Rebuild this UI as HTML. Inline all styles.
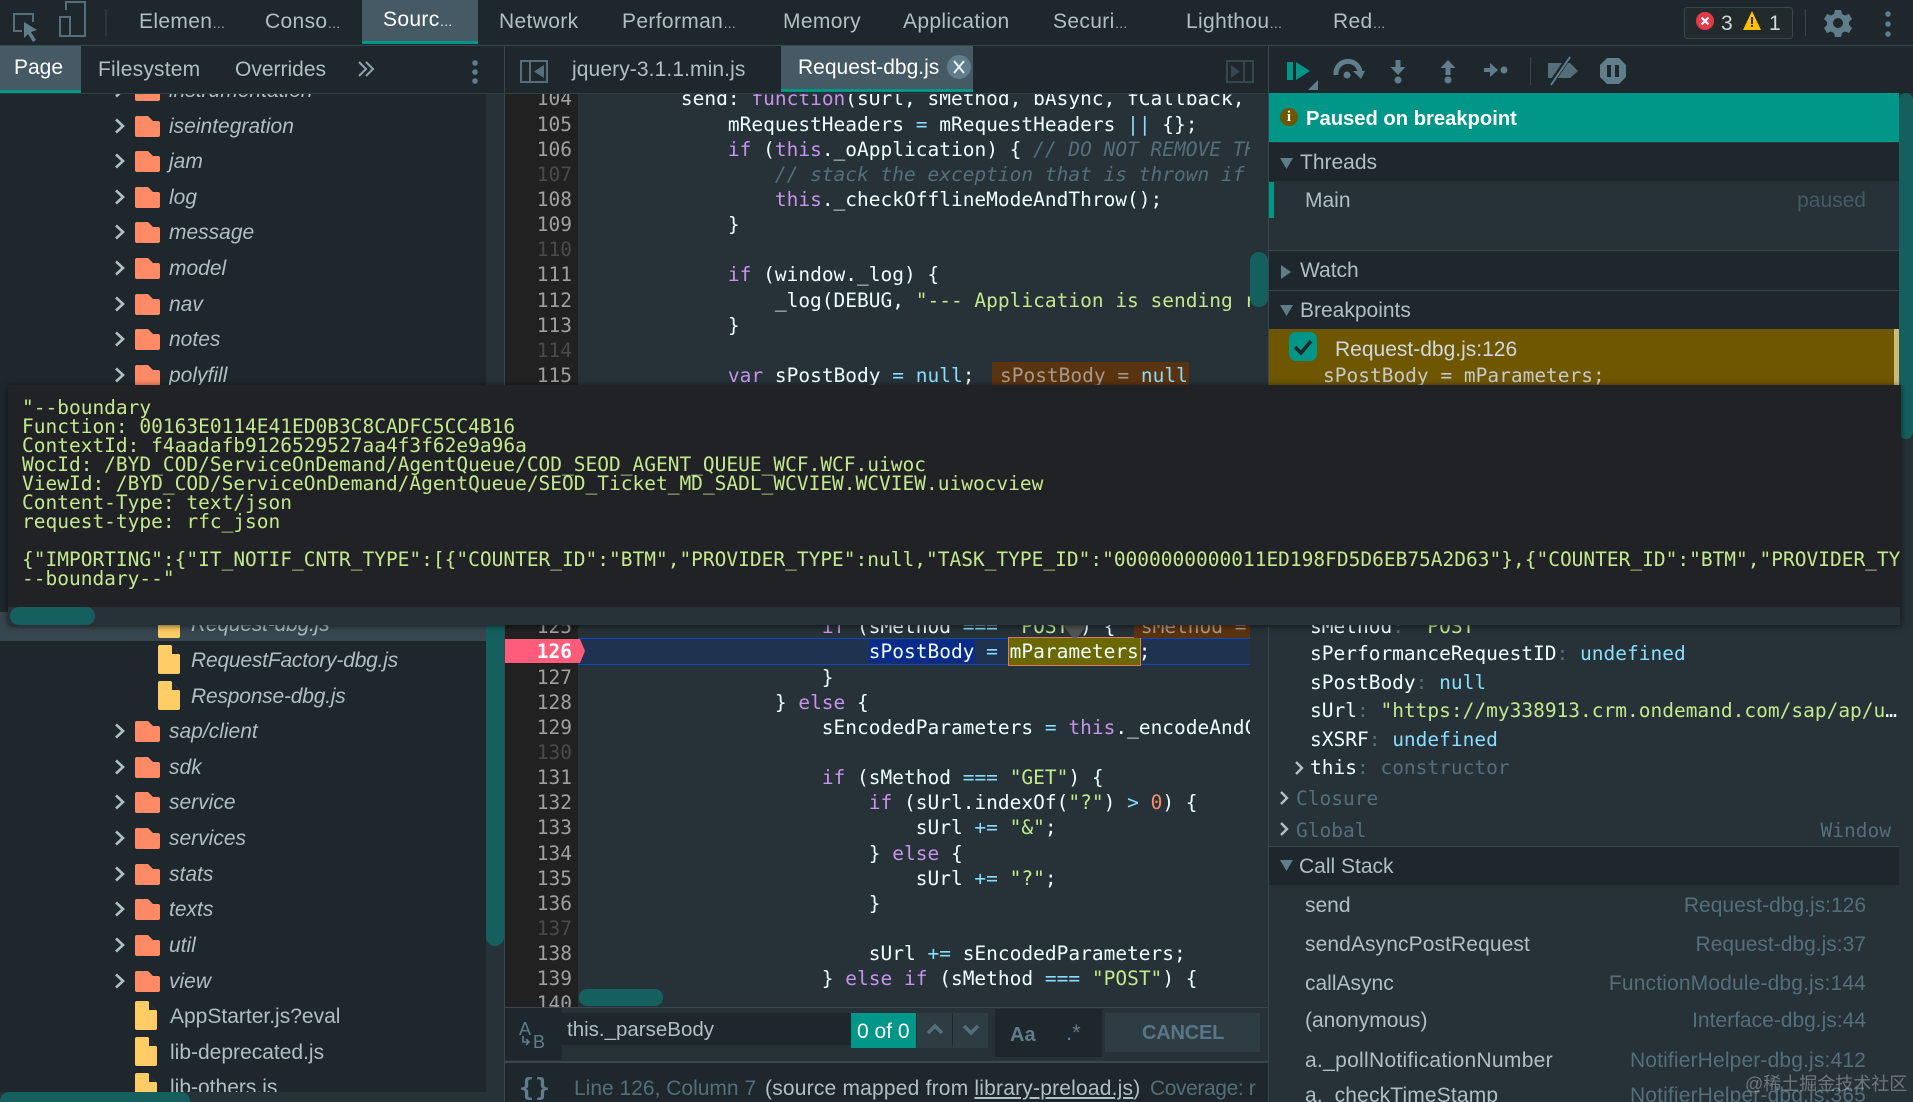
<!DOCTYPE html>
<html><head><meta charset="utf-8"><title>DevTools</title>
<style>
html,body{margin:0;padding:0;background:#263238}
#r{position:relative;width:1913px;height:1102px;overflow:hidden;background:#263238;font-family:"Liberation Sans",sans-serif;font-size:21px;color:#b0bec5}
.b{position:absolute}
.t{position:absolute;white-space:pre;line-height:24px;height:24px;margin-top:1px}
.t.m{margin-top:0}
.tb{letter-spacing:.35px}
.e{font-size:13px;letter-spacing:0}
.m{font-family:"DejaVu Sans Mono","Liberation Mono",monospace;font-size:19.5px;white-space:pre}
.i{font-style:italic}
.k{color:#c792ea}.o{color:#89ddff}.s{color:#c3e88d}.c{color:#546e7a;font-style:italic}.n{color:#f78c6c}
.iv{color:#a89a8a;margin-left:2px}
#code{position:absolute;left:587px;top:0;width:663px;height:1007px;overflow:hidden;padding-top:86.4px;box-sizing:border-box;color:#eeffff;white-space:normal}
#code div{height:25.15px;line-height:25.15px;white-space:pre}
#gut{position:absolute;left:505px;top:0;width:67px;padding-top:86.4px;box-sizing:content-box;text-align:right;color:#a0a0a0;overflow:hidden;padding-right:6px;background:#212121;height:920.6px}
#gut div{height:25.15px;line-height:25.15px}
#gut .d{color:#4a4a4a}
#tip{position:absolute;left:8px;top:385px;width:1893px;height:240px;background:#212226;box-shadow:0 1px 6px rgba(0,0,0,.6);overflow:hidden;color:#c3e88d}
#tip pre{position:absolute;left:14px;top:13px;margin:0;line-height:19px;font-family:"DejaVu Sans Mono",monospace;font-size:19.5px}
.sv{color:#89ddff}
</style></head><body><div id="r">

<!-- LEFT TREE -->
<div class="b" style="left:0;top:46px;width:504px;height:1056px;background:#1e272c"></div>
<div class="b" style="left:486px;top:93px;width:18px;height:1009px;background:#263238"></div>
<div class="b" style="left:486px;top:600px;width:18px;height:346px;background:#15605e;border-radius:0 0 9px 9px"></div>
<div class="b" style="left:0;top:612px;width:486px;height:29px;background:#37474f"></div>
<svg class="b" style="left:0;top:0" width="504" height="1102">
<defs>
<path id="fo" fill="#ff8a65" d="M0 2a2 2 0 0 1 2-2h11l5 5h5a2 2 0 0 1 2 2v12a2 2 0 0 1-2 2H2a2 2 0 0 1-2-2z"/>
<g id="fi"><path fill="#ffcc66" d="M2 0h11l9 10v17a2 2 0 0 1-2 2H2a2 2 0 0 1-2-2V2a2 2 0 0 1 2-2z"/><path fill="#1e272c" d="M14 1v8h7z"/></g>
<path id="ch" fill="none" stroke="#b0bec5" stroke-width="2.6" d="M0-6.5L7 0L0 6.5"/>
</defs>
<g>
<use href="#ch" x="116" y="90"/><use href="#fo" x="135" y="80"/>
<use href="#ch" x="116" y="126"/><use href="#fo" x="135" y="116"/>
<use href="#ch" x="116" y="161"/><use href="#fo" x="135" y="151"/>
<use href="#ch" x="116" y="197"/><use href="#fo" x="135" y="187"/>
<use href="#ch" x="116" y="232"/><use href="#fo" x="135" y="222"/>
<use href="#ch" x="116" y="268"/><use href="#fo" x="135" y="258"/>
<use href="#ch" x="116" y="304"/><use href="#fo" x="135" y="294"/>
<use href="#ch" x="116" y="339"/><use href="#fo" x="135" y="329"/>
<use href="#ch" x="116" y="375"/><use href="#fo" x="135" y="365"/>
<use href="#fi" x="158" y="609"/><use href="#fi" x="158" y="645"/><use href="#fi" x="158" y="681"/>
<use href="#ch" x="116" y="731"/><use href="#fo" x="135" y="721"/>
<use href="#ch" x="116" y="767"/><use href="#fo" x="135" y="757"/>
<use href="#ch" x="116" y="802"/><use href="#fo" x="135" y="792"/>
<use href="#ch" x="116" y="838"/><use href="#fo" x="135" y="828"/>
<use href="#ch" x="116" y="874"/><use href="#fo" x="135" y="864"/>
<use href="#ch" x="116" y="909"/><use href="#fo" x="135" y="899"/>
<use href="#ch" x="116" y="945"/><use href="#fo" x="135" y="935"/>
<use href="#ch" x="116" y="981"/><use href="#fo" x="135" y="971"/>
<use href="#fi" x="135" y="1001"/><use href="#fi" x="135" y="1037"/><use href="#fi" x="135" y="1073"/>
</g></svg>
<span class="t i" style="left:169px;top:78px">instrumentation</span>
<span class="t i" style="left:169px;top:114px">iseintegration</span>
<span class="t i" style="left:169px;top:149px">jam</span>
<span class="t i" style="left:169px;top:185px">log</span>
<span class="t i" style="left:169px;top:220px">message</span>
<span class="t i" style="left:169px;top:256px">model</span>
<span class="t i" style="left:169px;top:292px">nav</span>
<span class="t i" style="left:169px;top:327px">notes</span>
<span class="t i" style="left:169px;top:363px">polyfill</span>
<span class="t i" style="left:191px;top:612px;letter-spacing:-.2px">Request-dbg.js</span>
<span class="t i" style="left:191px;top:648px;letter-spacing:-.2px">RequestFactory-dbg.js</span>
<span class="t i" style="left:191px;top:684px;letter-spacing:-.2px">Response-dbg.js</span>
<span class="t i" style="left:169px;top:719px">sap/client</span>
<span class="t i" style="left:169px;top:755px">sdk</span>
<span class="t i" style="left:169px;top:790px">service</span>
<span class="t i" style="left:169px;top:826px">services</span>
<span class="t i" style="left:169px;top:862px">stats</span>
<span class="t i" style="left:169px;top:897px">texts</span>
<span class="t i" style="left:169px;top:933px">util</span>
<span class="t i" style="left:169px;top:969px">view</span>
<span class="t" style="left:170px;top:1004px">AppStarter.js?eval</span>
<span class="t" style="left:170px;top:1040px">lib-deprecated.js</span>
<span class="t" style="left:170px;top:1075px">lib-others.js</span>
<div class="b" style="left:0;top:1092px;width:486px;height:10px;background:#263238"></div>
<div class="b" style="left:0;top:1092px;width:190px;height:10px;background:#15605e;border-radius:9px 9px 0 0"></div>

<!-- EDITOR -->
<div class="b" style="left:504px;top:46px;width:1px;height:1056px;background:#37474f"></div>
<div class="b" style="left:578px;top:638px;width:672px;height:27px;background:#1f3350;border-top:1.5px solid #0d47c4;border-bottom:1.5px solid #0d47c4;box-sizing:border-box"></div>
<div class="b" style="left:869px;top:640px;width:106px;height:23px;background:#0a2b8a"></div>
<div class="b" style="left:1008px;top:637px;width:133px;height:29px;background:#6b6800;border:1px solid #e0775a;box-sizing:border-box"></div>
<div class="b" style="left:992px;top:362px;width:197px;height:25px;background:#5a3310"></div>
<div class="b" style="left:1134px;top:612px;width:116px;height:26px;background:#5a3310"></div>
<div class="m" id="gut"><div>104</div><div>105</div><div>106</div><div class="d">107</div><div>108</div><div>109</div><div class="d">110</div><div>111</div><div>112</div><div>113</div><div class="d">114</div><div>115</div><div>116</div><div>117</div><div>118</div><div>119</div><div>120</div><div>121</div><div>122</div><div>123</div><div>124</div><div>125</div><div style="color:#fff">126</div><div>127</div><div>128</div><div>129</div><div class="d">130</div><div>131</div><div>132</div><div>133</div><div>134</div><div>135</div><div>136</div><div class="d">137</div><div>138</div><div>139</div><div>140</div></div>
<svg class="b" style="left:505px;top:639px" width="81" height="24"><path fill="#ff5b7a" d="M0 0H75L80 12L75 24H0z"/></svg>
<span class="t m" style="left:505px;top:640px;width:67px;text-align:right;color:#fff;font-weight:bold;line-height:24px">126</span>
<div class="m" id="code"><div>        send: <span class="k">function</span>(sUrl, sMethod, bAsync, fCallback, </div><div>            mRequestHeaders <span class="o">=</span> mRequestHeaders <span class="o">||</span> {};</div><div>            <span class="k">if</span> (<span class="k">this</span>._oApplication) { <span class="c">// DO NOT REMOVE THIS</span></div><div>                <span class="c">// stack the exception that is thrown if</span></div><div>                <span class="k">this</span>._checkOfflineModeAndThrow();</div><div>            }</div><div></div><div>            <span class="k">if</span> (window._log) {</div><div>                _log(DEBUG, <span class="s">"--- Application is sending request</span></div><div>            }</div><div></div><div>            <span class="k">var</span> sPostBody <span class="o">=</span> <span class="o">null</span>;  <span class="iv">sPostBody = <span class="o">null</span></span></div><div></div><div></div><div></div><div></div><div></div><div></div><div></div><div></div><div></div><div>                    <span class="k">if</span> (sMethod <span class="o">===</span> <span class="s">"POST"</span>) {  <span class="iv">sMethod =</span></div><div>                        sPostBody <span class="o">=</span> mParameters;</div><div>                    }</div><div>                } <span class="k">else</span> {</div><div>                    sEncodedParameters <span class="o">=</span> <span class="k">this</span>._encodeAndCompose</div><div></div><div>                    <span class="k">if</span> (sMethod <span class="o">===</span> <span class="s">"GET"</span>) {</div><div>                        <span class="k">if</span> (sUrl.indexOf(<span class="s">"?"</span>) <span class="o">&gt;</span> <span class="n">0</span>) {</div><div>                            sUrl <span class="o">+=</span> <span class="s">"&amp;"</span>;</div><div>                        } <span class="k">else</span> {</div><div>                            sUrl <span class="o">+=</span> <span class="s">"?"</span>;</div><div>                        }</div><div></div><div>                        sUrl <span class="o">+=</span> sEncodedParameters;</div><div>                    } <span class="k">else if</span> (sMethod <span class="o">===</span> <span class="s">"POST"</span>) {</div></div>
<svg class="b" style="left:1063px;top:625px" width="24" height="16"><path fill="#5c5c5c" d="M0 0H24L12 16z" opacity=".8"/></svg>
<div class="b" style="left:579px;top:989px;width:84px;height:17px;background:#15605e;border-radius:8px"></div>
<div class="b" style="left:1250px;top:252px;width:18px;height:55px;background:#15605e;border-radius:9px"></div>
<div class="b" style="left:1268px;top:46px;width:1px;height:1056px;background:#37474f"></div>

<!-- SEARCH BAR / STATUS -->
<div class="b" style="left:505px;top:1007px;width:763px;height:54px;background:#263238;border-top:1px solid #37474f;box-sizing:border-box"></div>
<div class="b" style="left:505px;top:1008px;width:57px;height:52px;background:#1e272c"></div>
<div class="b" style="left:562px;top:1013px;width:426px;height:32px;background:#1e272c"></div>
<span class="t" style="left:519px;top:1016px;font-size:18px;color:#607d8b">A</span>
<span class="t" style="left:533px;top:1029px;font-size:18px;color:#607d8b">B</span>
<svg class="b" style="left:521px;top:1036px" width="12" height="12"><path fill="none" stroke="#607d8b" stroke-width="1.6" d="M2 0v6h6M5 3L8 6L5 9"/></svg>
<span class="t" style="left:567px;top:1017px;font-size:20.5px;color:#b0bec5">this._parseBody</span>
<div class="b" style="left:851px;top:1013px;width:65px;height:35px;background:#009688"></div>
<span class="t" style="left:857px;top:1019px;color:#fff;font-size:21px">0 of 0</span>
<div class="b" style="left:917px;top:1013px;width:35px;height:35px;background:#2e3c43"></div>
<div class="b" style="left:953px;top:1013px;width:35px;height:35px;background:#2e3c43"></div>
<svg class="b" style="left:917px;top:1013px" width="71" height="35"><path fill="none" stroke="#546e7a" stroke-width="3.5" d="M11 20L18 13L25 20M47 13L54 20L61 13"/></svg>
<div class="b" style="left:995px;top:1009px;width:107px;height:48px;background:#1e272c"></div>
<span class="t" style="left:1010px;top:1022px;color:#607d8b;font-size:20px;font-weight:bold">Aa</span>
<span class="t" style="left:1066px;top:1020px;color:#607d8b;font-size:22px">.*</span>
<div class="b" style="left:1105px;top:1013px;width:155px;height:39px;background:#2e3c43"></div>
<span class="t" style="left:1142px;top:1020px;color:#5a7585;font-weight:bold;font-size:20px;letter-spacing:-.2px">CANCEL</span>
<div class="b" style="left:505px;top:1061px;width:763px;height:41px;background:#1e272c;border-top:2px solid #37474f;box-sizing:border-box"></div>
<span class="t" style="left:519px;top:1075px;color:#607d8b;font-size:25px;font-family:'DejaVu Sans Mono',monospace;font-weight:bold;letter-spacing:1px">{}</span>
<span class="t" style="left:574px;top:1076px;color:#546e7a">Line 126, Column 7</span>
<span class="t" style="left:765px;top:1076px;color:#b0bec5;letter-spacing:.2px">(source mapped from <span style="text-decoration:underline">library-preload.js</span>)</span>
<span class="t" style="left:1150px;top:1076px;color:#546e7a;letter-spacing:-.4px">Coverage: r</span>

<!-- RIGHT PANEL -->
<div class="b" style="left:1269px;top:93px;width:631px;height:1009px;background:#263238"></div>
<div class="b" style="left:1900px;top:93px;width:13px;height:1009px;background:#263238"></div>
<div class="b" style="left:1899px;top:93px;width:14px;height:346px;background:#15605e;border-radius:8px"></div>
<div class="b" style="left:1269px;top:93px;width:630px;height:49px;background:#009688"></div>
<div class="b" style="left:1280px;top:108px;width:18px;height:18px;background:#6f5600;border-radius:50%;color:#fff;text-align:center;font:bold 15px/18px 'Liberation Serif',serif">i</div>
<span class="t" style="left:1306px;top:106px;color:#fff;font-weight:bold;font-size:20.2px">Paused on breakpoint</span>
<div class="b" style="left:1269px;top:143px;width:630px;height:38px;background:#1e272c"></div>
<svg class="b" style="left:1280px;top:158px" width="13" height="11"><path fill="#607d8b" d="M0 0H13L6.5 11z"/></svg>
<span class="t" style="left:1300px;top:150px;color:#b0bec5">Threads</span>
<div class="b" style="left:1269px;top:182px;width:5px;height:36px;background:#009688"></div>
<span class="t" style="left:1305px;top:188px;color:#b0bec5">Main</span>
<span class="t" style="right:47px;top:188px;color:#455a64">paused</span>
<div class="b" style="left:1269px;top:250px;width:630px;height:39px;background:#1e272c;border-top:1px solid #37474f"></div>
<svg class="b" style="left:1281px;top:265px" width="10" height="14"><path fill="#607d8b" d="M0 0L10 7L0 14z"/></svg>
<span class="t" style="left:1300px;top:258px;color:#b0bec5">Watch</span>
<div class="b" style="left:1269px;top:290px;width:630px;height:39px;background:#1e272c;border-top:1px solid #37474f"></div>
<svg class="b" style="left:1280px;top:305px" width="13" height="11"><path fill="#607d8b" d="M0 0H13L6.5 11z"/></svg>
<span class="t" style="left:1300px;top:298px;color:#b0bec5">Breakpoints</span>
<div class="b" style="left:1269px;top:329px;width:630px;height:60px;background:#6f5600"></div>
<div class="b" style="left:1894px;top:329px;width:5px;height:60px;background:#cdbb7a"></div>
<div class="b" style="left:1289px;top:332px;width:28px;height:29px;background:#009688;border-radius:7px"></div>
<svg class="b" style="left:1289px;top:332px" width="28" height="29"><path fill="none" stroke="#1e272c" stroke-width="3.5" d="M6 15L12 21L22 9"/></svg>
<span class="t" style="left:1335px;top:337px;color:#cfd8dc">Request-dbg.js:126</span>
<span class="t m" style="left:1323px;top:364px;color:#c5cacb">sPostBody = mParameters;</span>

<!-- scope -->
<span class="t m" style="left:1310px;top:615px;color:#eeffff">sMethod<span style="color:#546e7a">: </span><span class="s">"POST"</span></span>
<span class="t m" style="left:1310px;top:642px;color:#eeffff">sPerformanceRequestID<span style="color:#546e7a">: </span><span class="sv">undefined</span></span>
<span class="t m" style="left:1310px;top:671px;color:#eeffff">sPostBody<span style="color:#546e7a">: </span><span class="sv">null</span></span>
<span class="t m" style="left:1310px;top:699px;color:#eeffff;width:588px;overflow:hidden;text-overflow:ellipsis">sUrl<span style="color:#546e7a">: </span><span class="s">"https://my338913.crm.ondemand.com/sap/ap/ui/1"</span></span>
<span class="t m" style="left:1310px;top:728px;color:#eeffff">sXSRF<span style="color:#546e7a">: </span><span class="sv">undefined</span></span>
<span class="t m" style="left:1310px;top:756px;color:#eeffff">this<span style="color:#546e7a">: constructor</span></span>
<span class="t m" style="left:1296px;top:787px;color:#546e7a">Closure</span>
<span class="t m" style="left:1296px;top:819px;color:#546e7a">Global</span>
<span class="t m" style="right:22px;top:819px;color:#546e7a">Window</span>
<svg class="b" style="left:1280px;top:760px" width="30" height="80"><path fill="none" stroke="#b0bec5" stroke-width="2.4" d="M16 2L22 8L16 14M1 32L7 38L1 44M1 63L7 69L1 75"/></svg>
<div class="b" style="left:1269px;top:846px;width:630px;height:38px;background:#1e272c;border-top:1px solid #37474f"></div>
<svg class="b" style="left:1280px;top:860px" width="13" height="11"><path fill="#607d8b" d="M0 0H13L6.5 11z"/></svg>
<span class="t" style="left:1299px;top:854px;color:#b0bec5">Call Stack</span>
<span class="t" style="left:1305px;top:893px">send</span><span class="t" style="right:47px;top:893px;color:#546e7a">Request-dbg.js:126</span>
<span class="t" style="left:1305px;top:932px;letter-spacing:.1px">sendAsyncPostRequest</span><span class="t" style="right:47px;top:932px;color:#546e7a">Request-dbg.js:37</span>
<span class="t" style="left:1305px;top:971px">callAsync</span><span class="t" style="right:47px;top:971px;color:#546e7a;letter-spacing:.15px">FunctionModule-dbg.js:144</span>
<span class="t" style="left:1305px;top:1008px">(anonymous)</span><span class="t" style="right:47px;top:1008px;color:#546e7a">Interface-dbg.js:44</span>
<span class="t" style="left:1305px;top:1048px;letter-spacing:.3px">a._pollNotificationNumber</span><span class="t" style="right:47px;top:1048px;color:#546e7a;letter-spacing:.15px">NotifierHelper-dbg.js:412</span>
<span class="t" style="left:1305px;top:1083px;letter-spacing:.15px">a._checkTimeStamp</span><span class="t" style="right:47px;top:1083px;color:#546e7a;letter-spacing:.15px">NotifierHelper-dbg.js:365</span>
<span class="t" style="left:1745px;top:1071px;font:18px/24px 'Liberation Sans','Noto Sans CJK SC',sans-serif;color:rgba(255,255,255,.33)">@稀土掘金技术社区</span>

<!-- TOP TOOLBARS -->
<div class="b" style="left:0;top:0;width:1913px;height:45px;background:#1e272c"></div>
<div class="b" style="left:0;top:45px;width:1913px;height:1px;background:#37474f"></div>
<div class="b" style="left:0;top:46px;width:504px;height:47px;background:#1e272c"></div>
<div class="b" style="left:505px;top:46px;width:763px;height:47px;background:#1e272c"></div>
<div class="b" style="left:1269px;top:46px;width:644px;height:47px;background:#1e272c"></div>
<div class="b" style="left:0;top:93px;width:1268px;height:1px;background:#2f3d44"></div>

<div class="b" style="left:362px;top:0;width:116px;height:44px;background:#455a64;border-bottom:3px solid #009688;box-sizing:border-box"></div>
<span class="t tb" style="left:139px;top:9px">Elemen<span class="e">…</span></span>
<span class="t tb" style="left:265px;top:9px">Conso<span class="e">…</span></span>
<span class="t tb" style="left:383px;top:7px;color:#fff">Sourc<span class="e">…</span></span>
<span class="t tb" style="left:499px;top:9px">Network</span>
<span class="t tb" style="left:622px;top:9px">Performan<span class="e">…</span></span>
<span class="t tb" style="left:783px;top:9px">Memory</span>
<span class="t tb" style="left:903px;top:9px">Application</span>
<span class="t tb" style="left:1053px;top:9px">Securi<span class="e">…</span></span>
<span class="t tb" style="left:1186px;top:9px">Lighthou<span class="e">…</span></span>
<span class="t tb" style="left:1333px;top:9px">Red<span class="e">…</span></span>

<svg class="b" style="left:0;top:0" width="110" height="46">
<path fill="none" stroke="#546e7a" stroke-width="2" d="M22 31H14V14H33V22"/>
<path fill="#607d8b" d="M24 22L37 30L31 32L36 40L33 42L28 34L24 38z"/>
<path fill="none" stroke="#546e7a" stroke-width="2" d="M66 18V10H85V44H68" transform="translate(0 -8)"/>
<rect x="60" y="25" width="10" height="19" fill="none" stroke="#546e7a" stroke-width="2" transform="translate(0 -8)"/>
<rect x="105.500" y="9" width="1" height="27" fill="#37474f"/>
</svg>

<div class="b" style="left:1684px;top:7px;width:109px;height:32px;background:#222a2c;border:1px solid #37474f;border-radius:3px;box-sizing:border-box"></div>
<svg class="b" style="left:1690px;top:8px" width="90" height="30"><circle cx="15" cy="13" r="9" fill="#e53946"/><path stroke="#fff" stroke-width="2.2" d="M11.500 9.500L18.500 16.500M18.500 9.500L11.500 16.500"/><path fill="#ffc107" d="M62 3L71 22H53z"/><rect x="61" y="9" width="2" height="7" fill="#333"/><rect x="61" y="17" width="2" height="2" fill="#333"/></svg>
<span class="t" style="left:1721px;top:11px;color:#cfd8dc">3</span>
<span class="t" style="left:1769px;top:11px;color:#cfd8dc">1</span>
<div class="b" style="left:1805px;top:9px;width:1px;height:27px;background:#37474f"></div>
<svg class="b" style="left:1822px;top:8px" width="32" height="30"><path fill="#607d8b" fill-rule="evenodd" d="M13 2h6l1 4 3 1.500 4-1.500 3 5-3 3v3l3 3-3 5-4-1.500-3 1.500-1 4h-6l-1-4-3-1.500-4 1.500-3-5 3-3v-3l-3-3 3-5 4 1.500 3-1.500zM16 10a5 5 0 1 0 0 10 5 5 0 0 0 0-10z"/></svg>
<svg class="b" style="left:1882px;top:8px" width="12" height="32"><circle cx="6" cy="6" r="2.800" fill="#607d8b"/><circle cx="6" cy="16" r="2.800" fill="#607d8b"/><circle cx="6" cy="26" r="2.800" fill="#607d8b"/></svg>

<div class="b" style="left:0;top:46px;width:81px;height:47px;background:#455a64;border-bottom:3px solid #009688;box-sizing:border-box"></div>
<span class="t" style="left:14px;top:55px;color:#fff">Page</span>
<span class="t" style="left:98px;top:57px;letter-spacing:.2px">Filesystem</span>
<span class="t" style="left:235px;top:57px">Overrides</span>
<svg class="b" style="left:358px;top:60px" width="18" height="18"><path fill="none" stroke="#90a4ae" stroke-width="2" d="M1 2L8 9L1 16M8 2L15 9L8 16"/></svg>
<svg class="b" style="left:470px;top:58px" width="10" height="28"><circle cx="5" cy="5" r="2.800" fill="#607d8b"/><circle cx="5" cy="14" r="2.800" fill="#607d8b"/><circle cx="5" cy="23" r="2.800" fill="#607d8b"/></svg>

<svg class="b" style="left:520px;top:59px" width="30" height="26"><rect x="1" y="2" width="26" height="21" fill="none" stroke="#546e7a" stroke-width="2"/><rect x="9" y="2" width="2" height="21" fill="#546e7a"/><path fill="#546e7a" d="M24 6V19L14 12.500z"/></svg>
<span class="t" style="left:572px;top:57px;letter-spacing:.1px">jquery-3.1.1.min.js</span>
<div class="b" style="left:781px;top:46px;width:192px;height:46px;background:#455a64;border-bottom:3px solid #009688;box-sizing:border-box"></div>
<span class="t" style="left:798px;top:55px;color:#fff">Request-dbg.js</span>
<div class="b" style="left:947px;top:55px;width:24px;height:24px;background:#607d8b;border-radius:50%"></div>
<svg class="b" style="left:947px;top:55px" width="24" height="24"><path stroke="#eceff1" stroke-width="2" d="M7 6L17 18M17 6L7 18"/></svg>
<svg class="b" style="left:1226px;top:59px" width="30" height="26"><rect x="1" y="2" width="26" height="21" fill="none" stroke="#37474f" stroke-width="2"/><rect x="17" y="2" width="2" height="21" fill="#37474f"/><path fill="#37474f" d="M5 6V19L14 12.500z"/></svg>

<svg class="b" style="left:1269px;top:46px" width="370" height="47" viewBox="1269 46 370 47">
<rect x="1287" y="62" width="6" height="18" fill="#009688"/>
<path d="M1296 62L1310 71L1296 80z" fill="#009688"/>
<path d="M1318 80V90H1308z" fill="#607d8b"/>
<path d="M1336 75A12 12 0 0 1 1360 72" fill="none" stroke="#607d8b" stroke-width="5"/>
<path d="M1353 71L1365 71L1361 79z" fill="#607d8b"/>
<circle cx="1347" cy="75" r="3.500" fill="#607d8b"/>
<path d="M1395.500 60h5v7h5l-7.500 8-7.500-8h5z" fill="#607d8b"/><circle cx="1398" cy="80" r="3.500" fill="#607d8b"/>
<path d="M1445.500 75v-7h-5l7.500-8 7.500 8h-5v7z" fill="#607d8b"/><circle cx="1448" cy="80" r="3.500" fill="#607d8b"/>
<path d="M1484 68h6v-5l8 7-8 7v-5h-6z" fill="#607d8b"/><circle cx="1504" cy="70" r="3.500" fill="#607d8b"/>
<rect x="1530" y="57" width="1" height="28" fill="#37474f"/>
<path d="M1548 63H1570L1578 71L1570 78H1548z" fill="#546e7a"/>
<path d="M1569 57L1550 85" stroke="#1e272c" stroke-width="5"/>
<path d="M1570 57L1551 85" stroke="#607d8b" stroke-width="2"/>
<path d="M1607 58H1619L1626 65V77L1619 84H1607L1600 77V65z" fill="#607d8b"/>
<rect x="1607" y="65" width="4" height="12" fill="#1e272c"/><rect x="1615" y="65" width="4" height="12" fill="#1e272c"/>
</svg>

<!-- POPOVER -->
<div id="tip"><pre>"--boundary
Function: 00163E0114E41ED0B3C8CADFC5CC4B16
ContextId: f4aadafb9126529527aa4f3f62e9a96a
WocId: /BYD_COD/ServiceOnDemand/AgentQueue/COD_SEOD_AGENT_QUEUE_WCF.WCF.uiwoc
ViewId: /BYD_COD/ServiceOnDemand/AgentQueue/SEOD_Ticket_MD_SADL_WCVIEW.WCVIEW.uiwocview
Content-Type: text/json
request-type: rfc_json

{"IMPORTING":{"IT_NOTIF_CNTR_TYPE":[{"COUNTER_ID":"BTM","PROVIDER_TYPE":null,"TASK_TYPE_ID":"0000000000011ED198FD5D6EB75A2D63"},{"COUNTER_ID":"BTM","PROVIDER_TYPE":null}]}}
--boundary--"</pre>
<div class="b" style="left:0;top:222px;width:1892px;height:18px;background:#263238"></div>
<div class="b" style="left:2px;top:222px;width:85px;height:18px;background:#15605e;border-radius:9px"></div>
</div>
</div></body></html>
